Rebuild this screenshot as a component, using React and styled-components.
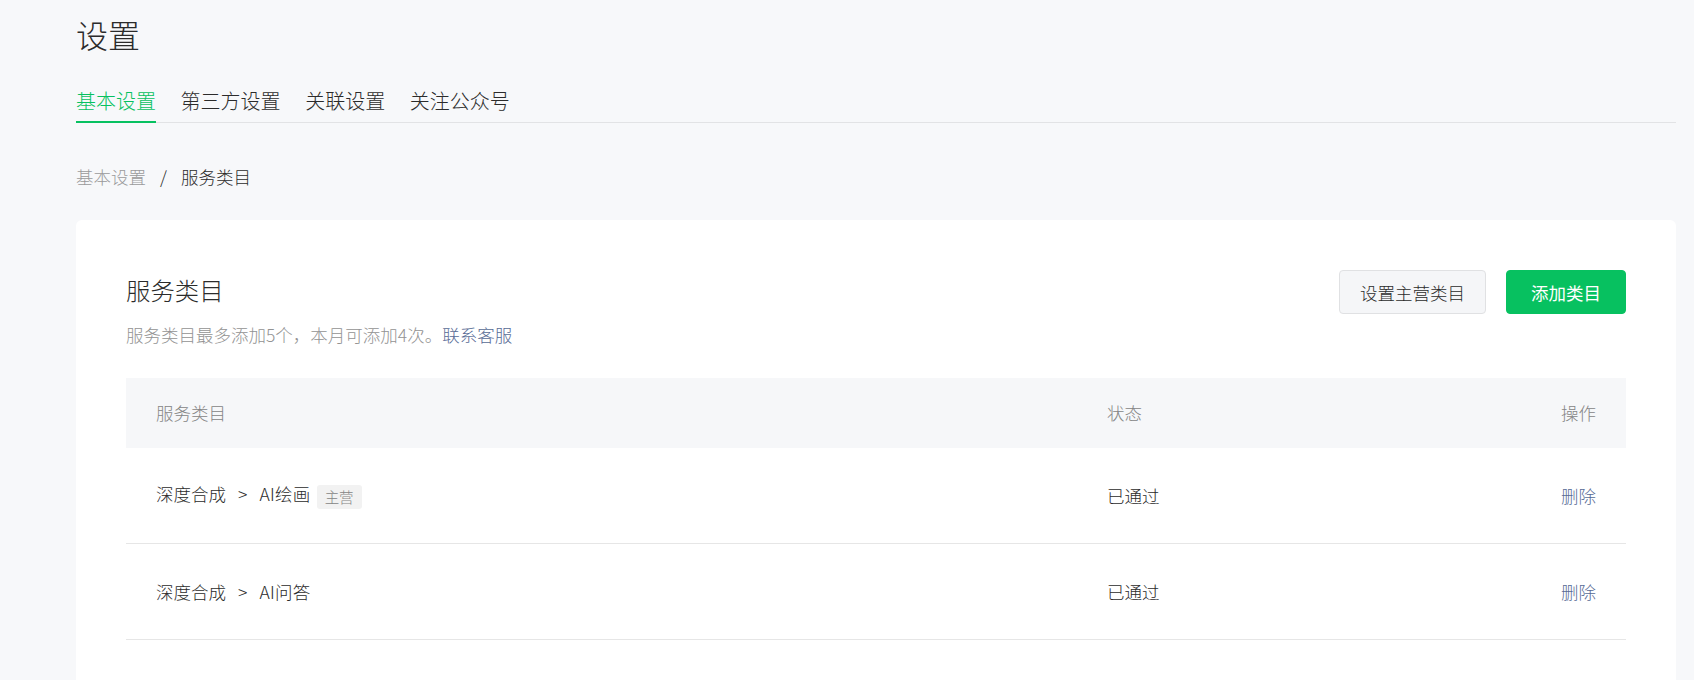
import React from 'react';
import styled, { createGlobalStyle } from 'styled-components';

const GlobalStyle = createGlobalStyle`
  body {
    margin: 0;
    background: #f7f8fa;
    font-family: "Noto Sans CJK SC", "Noto Sans", sans-serif;
    font-weight: 300;
    color: #2b2b2b;
  }
`;

const Page = styled.div`
  padding: 12px 18px 40px 76px;
`;

const Title = styled.h1`
  margin: 0 0 31px;
  font-size: 32px;
  line-height: 44px;
  font-weight: 300;
  color: #2b2b2b;
`;

const TabBar = styled.div`
  display: flex;
  gap: 24.6px;
  border-bottom: 1px solid #e2e3e5;
`;

const Tab = styled.div`
  font-size: 20px;
  line-height: 28px;
  padding-bottom: 6px;
  margin-bottom: -1px;
  border-bottom: 2px solid ${props => (props.active ? '#07c160' : 'transparent')};
  color: ${props => (props.active ? '#07c160' : '#2b2b2b')};
  cursor: pointer;
`;

const Breadcrumb = styled.div`
  margin-top: 42px;
  font-size: 17.5px;
  line-height: 24px;
  color: #9a9a9a;
`;

const Crumb = styled.span`
  color: ${props => (props.current ? '#2b2b2b' : '#9a9a9a')};
`;

const Slash = styled.span`
  margin: 0 14px;
  color: #2b2b2b;
`;

const Card = styled.div`
  margin-top: 31px;
  background: #fff;
  border-radius: 6px;
  padding: 50px 50px 60px;
`;

const CardHeader = styled.div`
  display: flex;
  justify-content: space-between;
  align-items: flex-start;
`;

const CardTitle = styled.h2`
  margin: 3px 0 0;
  font-size: 24.4px;
  line-height: 34px;
  font-weight: 300;
  color: #2b2b2b;
`;

const Desc = styled.p`
  margin: 16px 0 0;
  font-size: 17.5px;
  line-height: 24px;
  color: #939393;
`;

const Link = styled.a`
  color: #576b95;
  text-decoration: none;
  cursor: pointer;
`;

const Actions = styled.div`
  display: flex;
  gap: 20px;
`;

const Button = styled.button`
  height: 44px;
  min-width: 120px;
  padding: 0 20px;
  border-radius: 4px;
  font-family: inherit;
  font-weight: ${props => (props.primary ? 400 : 300)};
  font-size: 17.5px;
  border: 1px solid ${props => (props.primary ? '#07c160' : '#e0e1e3')};
  background: ${props => (props.primary ? '#07c160' : '#f5f6f8')};
  color: ${props => (props.primary ? '#fff' : '#2b2b2b')};
  cursor: pointer;
`;

const Table = styled.div`
  margin-top: 31px;
  font-size: 17.5px;
  line-height: 24px;
`;

const HeadRow = styled.div`
  display: grid;
  grid-template-columns: 951px 1fr auto;
  align-items: center;
  height: 70px;
  padding: 0 30px;
  background: #f6f7f9;
  color: #858585;
`;

const Row = styled.div`
  display: grid;
  grid-template-columns: 951px 1fr auto;
  align-items: center;
  height: 95px;
  padding: 0 30px;
  border-bottom: 1px solid #e6e6e6;
  color: #2b2b2b;
`;

const Arrow = styled.span`
  margin: 0 12px;
`;

const Name = styled.span`
  letter-spacing: 0.3px;
`;

const Tag = styled.span`
  display: inline-block;
  margin-left: 6px;
  padding: 0 8px;
  height: 24px;
  line-height: 24px;
  border-radius: 3px;
  background: #f2f2f2;
  color: #858585;
  font-size: 14.5px;
  vertical-align: middle;
`;

const categories = [
  { parent: '深度合成', name: 'AI绘画', main: true, status: '已通过' },
  { parent: '深度合成', name: 'AI问答', main: false, status: '已通过' }
];

const tabs = ['基本设置', '第三方设置', '关联设置', '关注公众号'];

export default function App() {
  return (
    <Page>
      <GlobalStyle />
      <Title>设置</Title>
      <TabBar>
        {tabs.map((t, i) => (
          <Tab key={t} active={i === 0}>{t}</Tab>
        ))}
      </TabBar>
      <Breadcrumb>
        <Crumb>基本设置</Crumb>
        <Slash>/</Slash>
        <Crumb current>服务类目</Crumb>
      </Breadcrumb>
      <Card>
        <CardHeader>
          <div>
            <CardTitle>服务类目</CardTitle>
            <Desc>
              服务类目最多添加5个，本月可添加4次。<Link>联系客服</Link>
            </Desc>
          </div>
          <Actions>
            <Button>设置主营类目</Button>
            <Button primary>添加类目</Button>
          </Actions>
        </CardHeader>
        <Table>
          <HeadRow>
            <span>服务类目</span>
            <span>状态</span>
            <span>操作</span>
          </HeadRow>
          {categories.map(c => (
            <Row key={c.name}>
              <span>
                {c.parent}
                <Arrow>&gt;</Arrow>
                <Name>{c.name}</Name>
                {c.main && <Tag>主营</Tag>}
              </span>
              <span>{c.status}</span>
              <Link>删除</Link>
            </Row>
          ))}
        </Table>
      </Card>
    </Page>
  );
}
